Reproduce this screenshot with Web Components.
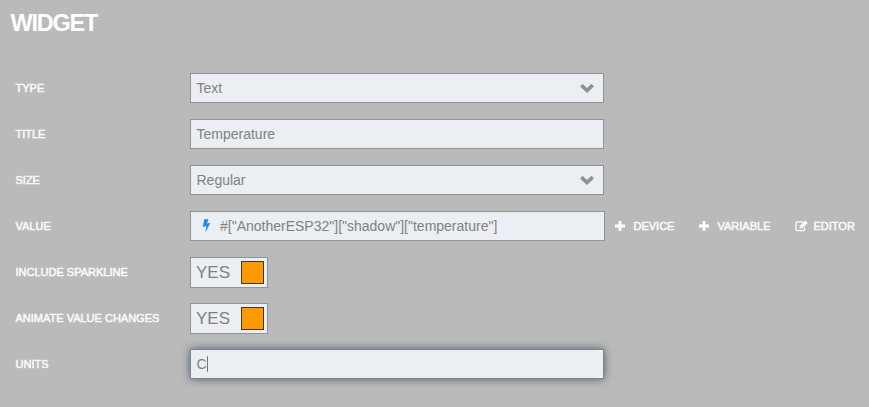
<!DOCTYPE html>
<html lang="en"><head><meta charset="utf-8"><title>Widget</title>
<style>
html,body{margin:0;height:100%;background:#bababa;overflow:hidden}
body{font-family:"Liberation Sans",Arial,sans-serif}
</style></head><body>
<widget-dialog heading="WIDGET">
  <form-row label="TYPE"><field-box text="Text" kind="select"></field-box></form-row>
  <form-row label="TITLE"><field-box text="Temperature"></field-box></form-row>
  <form-row label="SIZE"><field-box text="Regular" kind="select"></field-box></form-row>
  <form-row label="VALUE"><field-box text='#["AnotherESP32"]["shadow"]["temperature"]' kind="calc"></field-box><source-tool icon="plus" style="width:84px;margin-left:9.5px">DEVICE</source-tool><source-tool icon="plus" style="width:96px">VARIABLE</source-tool><source-tool icon="edit">EDITOR</source-tool></form-row>
  <form-row label="INCLUDE SPARKLINE"><toggle-switch>YES</toggle-switch></form-row>
  <form-row label="ANIMATE VALUE CHANGES"><toggle-switch>YES</toggle-switch></form-row>
  <form-row label="UNITS"><field-box text="C" kind="focus"></field-box></form-row>
</widget-dialog>
<script>
class Base extends HTMLElement{
  connectedCallback(){ if(!this.shadowRoot) this.attachShadow({mode:'open'}).innerHTML=this.view(); }
}
customElements.define('widget-dialog',class extends Base{view(){return `
<style>:host{display:block;width:869px;height:407px;box-sizing:border-box;padding-top:8px}
h1{margin:0 0 27px 10.5px;height:30px;font:bold 23.5px/30px "Liberation Sans",Arial,sans-serif;letter-spacing:-1.25px;color:#fff}</style>
<h1>${this.getAttribute('heading')}</h1><slot></slot>`}});
customElements.define('form-row',class extends Base{view(){return `
<style>:host{display:flex;height:46px;align-items:flex-start;padding-left:15px}
label{width:175px;box-sizing:border-box;padding-left:.5px;flex:none;font:11px/46px "Liberation Sans",Arial,sans-serif;-webkit-text-stroke:.5px #fafafa;color:#fafafa;white-space:nowrap}
.c{display:flex;padding-top:8px}</style>
<label><span>${this.getAttribute('label')}</span></label><div class="c"><slot></slot></div>`}});
customElements.define('field-box',class extends Base{view(){
 const k=this.getAttribute('kind');return `
<style>:host{display:flex;align-items:center;box-sizing:border-box;width:414px;height:30px;border:1px solid #919396;background:#ebeef3;color:#818181;font-size:14px;line-height:28px;padding:0 9px 0 5.5px;white-space:nowrap}
:host([kind=calc]){width:415px;padding-left:11px}
:host([kind=focus]){border-color:#7d868b;box-shadow:0 0 8px #4c5b61}
.arrow{margin-left:auto}.bolt{margin-right:9px}.caret{width:1px;height:16px;background:#777}
svg{display:block;flex:none}</style>
${k==='calc'?'<svg class="bolt" width="9" height="14" viewBox="0 0 9 14"><path d="M2.3 0.3H6.4L5 4.4L8.4 3.7L3.5 13.5L4.4 7.1L0.7 7.9Z" fill="#1b8bee"/></svg>':''}<span>${this.getAttribute('text')}</span>
${k==='select'?'<svg class="arrow" width="14" height="11" viewBox="0 0 14 11"><path d="M2.6 3.4L7 7.6L11.4 3.4" fill="none" stroke="#8f9193" stroke-width="3.6" stroke-linecap="square"/></svg>':''}${k==='focus'?'<i class="caret"></i>':''}`}});
customElements.define('toggle-switch',class extends Base{view(){return `
<style>:host{display:flex;align-items:center;justify-content:space-between;box-sizing:border-box;width:78px;height:31px;border:1px solid #919396;background:#ebeef3;color:#818181;font-size:17px;line-height:29px;padding:0 3px 0 5px}
i{box-sizing:border-box;width:23px;height:23px;background:#ff9900;border:1px solid #41382c}</style><span><slot></slot></span><i></i>`}});
customElements.define('source-tool',class extends Base{view(){
 const plus=this.getAttribute('icon')==='plus';return `
<style>:host{display:flex;align-items:center;height:30px;color:#fafafa;font-size:11px;-webkit-text-stroke:.5px #fafafa;line-height:30px}
svg{display:block;-webkit-text-stroke:0;margin-right:${plus?9:6}px}</style>
${plus?'<svg width="10" height="10" viewBox="0 0 10 10"><path d="M3.6 0H6.4V3.6H10V6.4H6.4V10H3.6V6.4H0V3.6H3.6Z" fill="#fff"/></svg>':
'<svg width="13" height="12" viewBox="0 0 13 12"><path d="M8.2 1.9H2.6Q1 1.9 1 3.5V9.1Q1 10.7 2.6 10.7H8Q9.6 10.7 9.6 9.1V7.6" fill="none" stroke="#fff" stroke-width="1.3"/><path d="M4.6 6L10.2 .4L12.7 2.9L7.1 8.5H4.6Z" fill="#fff"/><path d="M5.3 6.5L6.6 7.8" stroke="#bababa" stroke-width=".8"/></svg>'}<span><slot></slot></span>`}});
</script></body></html>
